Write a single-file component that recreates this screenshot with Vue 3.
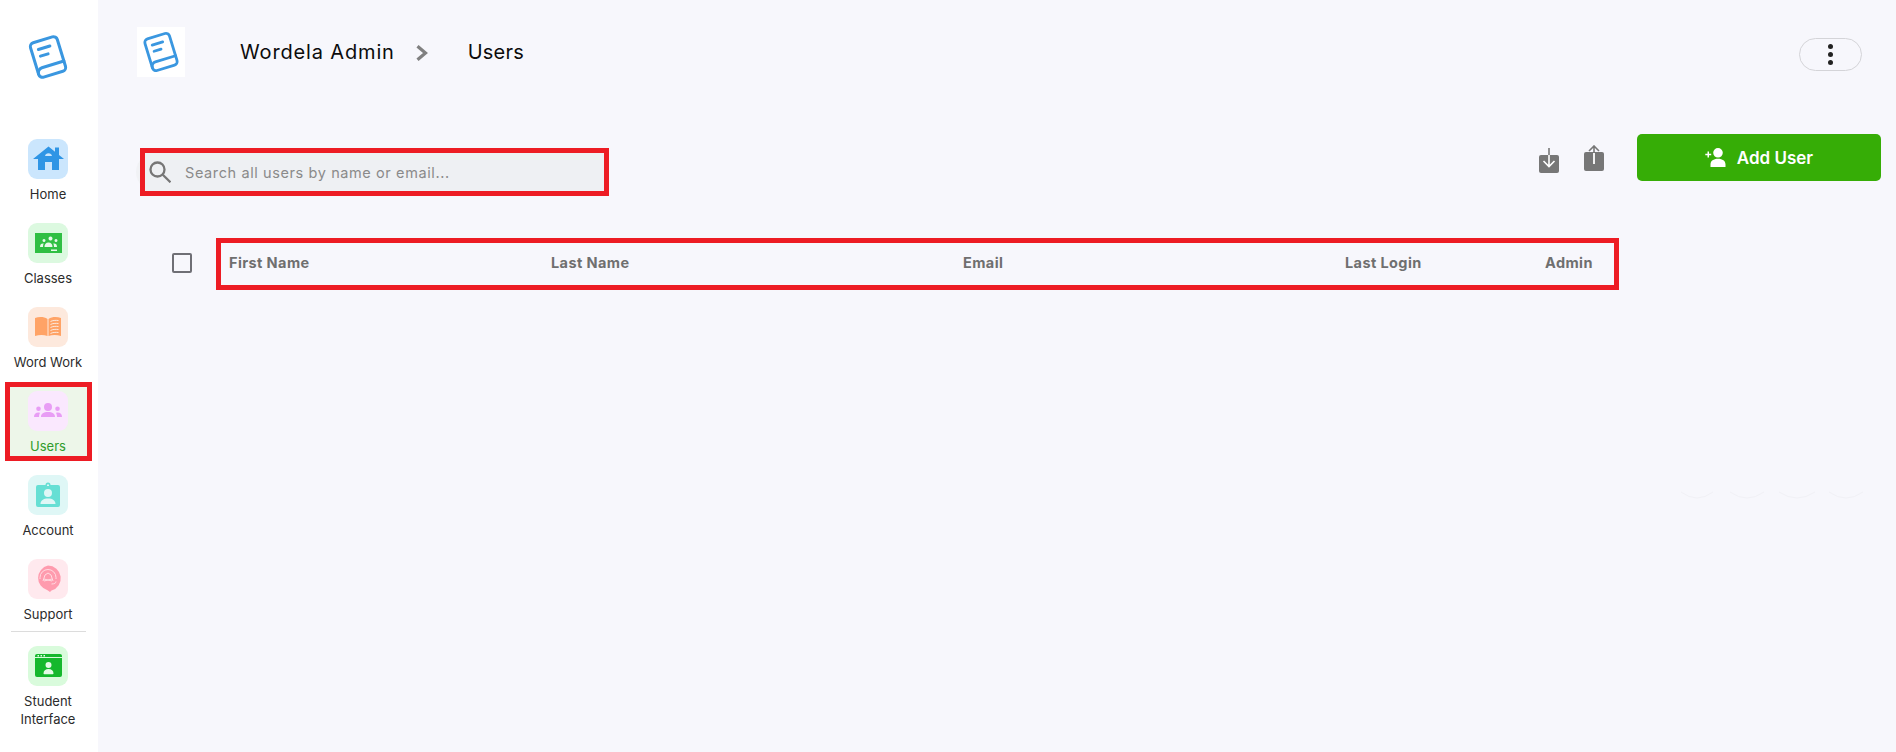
<script setup>
const nav = [
  { label: 'Home', tile: '#cbe6fd', shapes: [
    { d: 'M5 20 20.500 7.500 27 12.700V8.500h4V16l5 4h-5v11h-7v-8h-7v8h-7V20Z', fill: '#2f95e5' },
    { d: 'M17 17a3.600 3.600 0 0 1 7 0Z', fill: '#cbe6fd' }
  ] },
  { label: 'Classes', tile: '#dcf9e0', shapes: [
    { d: 'M7 10h27v20H7Z', fill: '#2fbf43' },
    { d: 'M20.500 15.500a2 2 0 1 1 0 .01ZM14.500 17.500a1.500 1.500 0 1 1 0 .01ZM26.500 17.500a1.500 1.500 0 1 1 0 .01ZM16.500 24c0-3 1.500-4.500 4-4.500s4 1.500 4 4.500ZM12 24c0-2.500 1-3.500 3-3.500.300 0 .500 0 .700.100-.500 1-.700 2-.700 3.400ZM29 24c0-2.500-1-3.500-3-3.500-.300 0-.500 0-.700.100.500 1 .700 2 .700 3.400ZM23 26.500h6v1.500h-6Z', fill: '#e7fae9' }
  ] },
  { label: 'Word Work', tile: '#fde9dd', shapes: [
    { d: 'M7 11c4-1.500 9-1.500 12.500 1v17c-3.500-1.500-8.500-1.500-12.500 0Z', fill: '#ffa366' },
    { d: 'M20.500 12c3.500-2.500 8.500-2.500 12.500-1v18c-4-1.500-9-1.500-12.500 0Z', fill: '#ffa366' },
    { d: 'M22.500 14.500c2-1.100 5-1.400 8-1M22.500 17.500c2-1.100 5-1.400 8-1M22.500 20.500c2-1.100 5-1.400 8-1M22.500 23.500c2-1.100 5-1.400 8-1M22.500 26.500c2-1.100 5-1.400 8-1', stroke: '#fde9dd' }
  ] },
  { label: 'Users', tile: '#fae8fe', active: true, shapes: [
    { d: 'M20 12a4 4 0 1 1 0 8 4 4 0 0 1 0-8ZM10.500 15.500a2.300 2.300 0 1 1 0 4.600 2.300 2.300 0 0 1 0-4.600ZM29.500 15.500a2.300 2.300 0 1 1 0 4.600 2.300 2.300 0 0 1 0-4.600ZM13 26c0-3.500 2.500-5 7-5s7 1.500 7 5ZM6 26c0-2.800 1.500-4.500 4.500-4.500l1.500.200c-.700 1.200-1 2.600-1 4.300ZM34 26c0-2.800-1.500-4.500-4.500-4.500l-1.500.200c.700 1.200 1 2.600 1 4.300Z', fill: '#e89df5' }
  ] },
  { label: 'Account', tile: '#dff7f6', shapes: [
    { d: 'M10 10h7.500a2.500 2.500 0 0 1 5 0H30a2 2 0 0 1 2 2v18a2 2 0 0 1-2 2H10a2 2 0 0 1-2-2V12a2 2 0 0 1 2-2Z', fill: '#66dfd4' },
    { d: 'M20 14a4 4 0 1 1 0 8 4 4 0 0 1 0-8ZM12.500 29c0-3.500 3-5.500 7.500-5.500s7.500 2 7.500 5.500ZM19 9.500h2v1.500h-2Z', fill: '#dff7f6' }
  ] },
  { label: 'Support', tile: '#ffe9ee', shapes: [
    { d: 'M20 6.500a12.800 12.800 0 0 1 3.500 25.100L22 33l-2.500-1.700A12.800 12.800 0 0 1 20 6.500Z', fill: '#ff9bae' },
    { d: 'M12 20v-1.500a8 8 0 0 1 16 0V20M28 22.500c0 1.500-1.500 2.500-4.500 2.500M15 22l2-6 3-2 3 2 2 6M16 20l8 2M24 20l-8 2', stroke: '#ffdce3' }
  ] },
  { label: 'Student Interface', tile: '#d9fbdc', shapes: [
    { d: 'M9 8h23a2 2 0 0 1 2 2v19a2 2 0 0 1-2 2H9a2 2 0 0 1-2-2V10a2 2 0 0 1 2-2Z', fill: '#15b82d' },
    { d: 'M7 11.500h27', stroke: '#d9fbdc' },
    { d: 'M9.500 9h1.500v1.500H9.500ZM12.500 9H14v1.500h-1.500ZM15.500 9H17v1.500h-1.500ZM20.500 16a3 3 0 1 1 0 6 3 3 0 0 1 0-6ZM15.500 27.500c0-3 2-4.500 5-4.500s5 1.500 5 4.500a.800.800 0 0 1-.800.800h-8.400a.800.800 0 0 1-.800-.800Z', fill: '#e4fbe6' }
  ] }
]
const columns = ['First Name', 'Last Name', 'Email', 'Last Login', 'Admin']
</script>

<template>
  <div class="page">
    <aside class="sidebar">
      <div class="side-logo">
        <svg viewBox="0 0 48 52" width="48" height="52" fill="none" stroke="#3a97e0" stroke-width="3" stroke-linecap="round">
          <g transform="rotate(-17 24 26)">
            <rect x="10" y="8" width="28" height="36" rx="4" />
            <path d="M10 39.500a5 5 0 0 1 5-5h23M17 16h12M17 23h8" />
          </g>
        </svg>
      </div>
      <nav class="nav">
        <template v-for="item in nav" :key="item.label">
          <div v-if="item.label === 'Student Interface'" class="rule"></div>
          <a class="nav-item" :class="{ active: item.active }">
            <span class="tile" :style="{ background: item.tile }">
              <svg viewBox="0 0 40 40" width="40" height="40">
                <path
                  v-for="(s, i) in item.shapes"
                  :key="i"
                  :d="s.d"
                  :fill="s.fill || 'none'"
                  :stroke="s.stroke || 'none'"
                  stroke-width="1"
                />
              </svg>
            </span>
            <span class="nav-label">{{ item.label }}</span>
          </a>
        </template>
      </nav>
    </aside>

    <main class="main">
      <header class="topbar">
        <div class="top-logo">
          <svg viewBox="0 0 48 52" width="44" height="48" fill="none" stroke="#3a97e0" stroke-width="3" stroke-linecap="round">
            <g transform="rotate(-17 24 26)">
              <rect x="10" y="8" width="28" height="36" rx="4" />
              <path d="M10 39.500a5 5 0 0 1 5-5h23M17 16h12M17 23h8" />
            </g>
          </svg>
        </div>
        <span class="crumb first">Wordela Admin</span>
        <svg class="chev" viewBox="0 0 12 16" width="12" height="16" fill="none" stroke="#808080" stroke-width="3.200">
          <path d="M1.500 1.200 9.500 8l-8 6.800" />
        </svg>
        <span class="crumb">Users</span>
        <button class="kebab" aria-label="More">
          <i></i><i></i><i></i>
        </button>
      </header>

      <section class="toolbar">
        <div class="search">
          <svg viewBox="0 0 22 22" width="22" height="22" fill="none" stroke="#767676" stroke-width="2.300">
            <circle cx="8.500" cy="8.500" r="7" />
            <path d="m13.800 13.800 7.700 7.500" />
          </svg>
          <span class="placeholder">Search all users by name or email...</span>
        </div>
        <div class="actions">
          <svg class="act down" viewBox="0 0 20 25" width="20" height="25">
            <path d="M2 7h16a2 2 0 0 1 2 2v14a2 2 0 0 1-2 2H2a2 2 0 0 1-2-2V9a2 2 0 0 1 2-2Z" fill="#777" />
            <path d="M10 7v11M4.500 13 10 18.500 15.500 13" fill="none" stroke="#fff" stroke-width="1.600" />
            <path d="M10 0v7" stroke="#777" stroke-width="1.600" />
          </svg>
          <svg class="act up" viewBox="0 0 20 26" width="20" height="26">
            <path d="M2 7h16a2 2 0 0 1 2 2v15a2 2 0 0 1-2 2H2a2 2 0 0 1-2-2V9a2 2 0 0 1 2-2Z" fill="#777" />
            <path d="M10 8v11" fill="none" stroke="#fff" stroke-width="1.800" />
            <path d="M10 8V1M5 6l5-5 5 5" fill="none" stroke="#777" stroke-width="1.600" />
          </svg>
          <button class="add">
            <svg viewBox="0 0 22 19" width="22" height="19" fill="#fff">
              <path d="M13 0a4.800 4.800 0 1 1 0 9.600A4.800 4.800 0 0 1 13 0ZM5.500 19v-2.500c0-3.500 3-5.700 7.500-5.700s7.500 2.200 7.500 5.700V19ZM2.500 3.500h1.500v2.300h2.200v1.500H4v2.200H2.500V7.300H.3V5.800h2.200Z" />
            </svg>
            Add User
          </button>
        </div>
      </section>

      <section class="table-head">
        <span class="check"></span>
        <div class="cols">
          <span v-for="c in columns" :key="c" class="col">{{ c }}</span>
        </div>
      </section>

      <svg class="arcs" viewBox="0 0 190 10" width="190" height="10" fill="none" stroke="#f1f1f6">
        <path d="M1 1q16 12 32 0M50 1q17 12 34 0M99 1q18 12 36 0M149 1q17 12 34 0" />
      </svg>
    </main>
  </div>
</template>

<style>
html, body { margin: 0; background: #f7f7fc; }
</style>

<style scoped>
.page {
  display: flex;
  width: 1896px;
  height: 752px;
  overflow: hidden;
  background: #f7f7fc;
  font-family: Inter, "Noto Sans", sans-serif;
}
.sidebar {
  width: 98px;
  flex: none;
  background: #fff;
  display: flex;
  flex-direction: column;
  align-items: center;
  padding-top: 31px;
  box-sizing: border-box;
}
.side-logo { height: 52px; line-height: 0; margin-left: -2px; }
.nav {
  margin-top: 56px;
  display: flex;
  flex-direction: column;
  align-items: center;
  width: 100%;
}
.nav-item {
  width: 87px;
  height: 84px;
  box-sizing: border-box;
  display: flex;
  flex-direction: column;
  align-items: center;
  margin-left: -2px;
  flex: none;
  color: #2b2b2b;
}
.nav-item.active {
  height: 79px;
  margin: -9px 0 14px -2px;
  padding-top: 4px;
  border: 5px solid #ed1c24;
  background: #edf6e9;
  color: #2f9b2c;
}
.tile {
  width: 40px;
  height: 40px;
  border-radius: 9px;
  flex: none;
  line-height: 0;
}
.nav-label {
  margin-top: 6px;
  font-size: 13px;
  line-height: 18px;
  text-align: center;
}
.rule {
  width: 75px;
  height: 1px;
  margin: -12px 0 14px -2px;
  background: #dcdcdc;
  flex: none;
}
.main {
  flex: 1;
  position: relative;
  z-index: 0;
  padding: 27px 15px 0 39px;
  box-sizing: border-box;
}
.topbar {
  display: flex;
  align-items: center;
  height: 50px;
}
.top-logo {
  width: 48px;
  height: 50px;
  background: #fff;
  display: flex;
  align-items: center;
  justify-content: center;
  flex: none;
}
.crumb { font-size: 20px; color: #0c0c0c; letter-spacing: 0.2px; }
.crumb.first { margin-left: 55px; letter-spacing: 0.85px; }
.chev { margin: 1px 40px 0 21px; flex: none; }
.kebab {
  margin: 0 19px 0 auto;
  width: 63px;
  height: 33px;
  padding: 0;
  border: 1px solid #d4d4d8;
  border-radius: 17px;
  background: transparent;
  display: flex;
  flex-direction: column;
  align-items: center;
  justify-content: center;
  gap: 3px;
  transform: translateY(2px);
}
.kebab i { width: 5px; height: 5px; border-radius: 50%; background: #222; }
.toolbar {
  display: flex;
  justify-content: space-between;
  align-items: flex-start;
  margin-top: 54px;
}
.search {
  position: relative;
  width: 469px;
  height: 48px;
  margin: 17px 0 0 3px;
  box-sizing: border-box;
  border: 5px solid #ed1c24;
  background: #eef0f3;
  display: flex;
  align-items: center;
  padding-left: 4px;
  gap: 14px;
}
.search::before {
  content: "";
  position: absolute;
  z-index: -1;
  left: -9px;
  top: 0;
  width: 30px;
  height: 38px;
  border-radius: 19px 0 0 19px;
  background: #f1f2f5;
}
.placeholder { font-size: 14.500px; letter-spacing: 0.6px; color: #8a8a8a; }
.actions { display: flex; align-items: flex-start; margin-top: 3px; }
.act { flex: none; }
.act.down { margin: 14px 25px 0 0; }
.act.up { margin: 11px 33px 0 0; }
.add {
  width: 244px;
  height: 47px;
  border: 0;
  border-radius: 5px;
  background: #36ad06;
  color: #fff;
  font: 600 17px Inter, "Noto Sans", sans-serif;
  display: flex;
  align-items: center;
  justify-content: center;
  gap: 10px;
  padding: 0;
}
.table-head {
  display: flex;
  align-items: center;
  margin-top: 42px;
  padding-left: 35px;
}
.check {
  width: 20px;
  height: 20px;
  margin-bottom: 2px;
  box-sizing: border-box;
  border: 2px solid #6f6f75;
  border-radius: 2px;
  flex: none;
}
.cols {
  width: 1403px;
  height: 52px;
  margin-left: 24px;
  box-sizing: border-box;
  border: 5px solid #ed1c24;
  display: grid;
  grid-template-columns: 322px 412px 382px 200px 1fr;
  align-items: center;
  padding: 0 0 3px 8px;
}
.col { font-size: 14.500px; font-weight: 700; letter-spacing: 0.4px; color: #6f6f6f; white-space: nowrap; }
.arcs { position: absolute; left: 1582px; top: 491px; }
</style>
